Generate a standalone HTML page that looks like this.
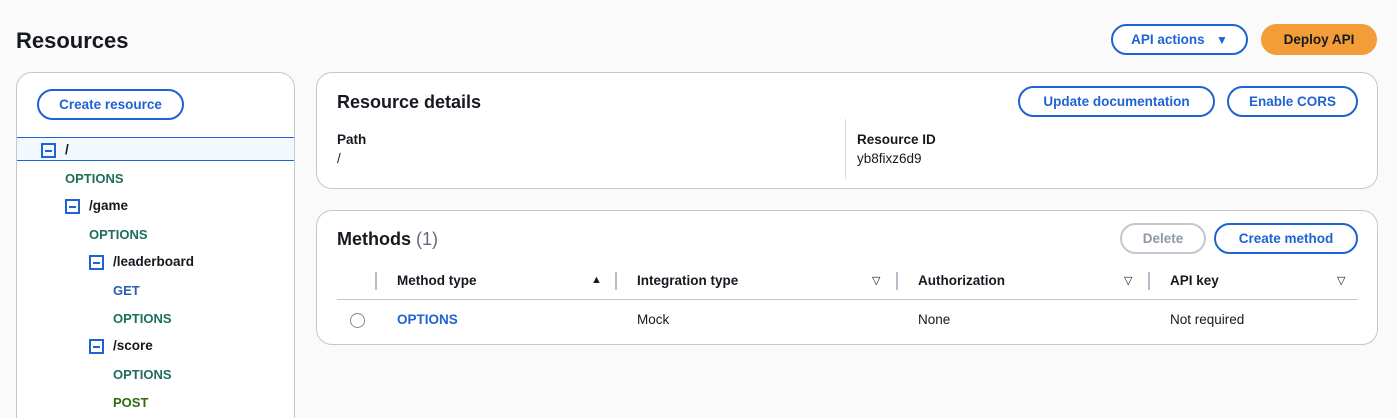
<!DOCTYPE html>
<html style="overflow:hidden;height:418px"><head><style>
*{box-sizing:border-box;margin:0;padding:0}
body{width:1397px;height:418px;background:#fafafa;font-family:"Liberation Sans",sans-serif;font-size:13.5px;color:#16191f;position:relative;overflow:hidden}
.abs{position:absolute}
.btn{position:absolute;border:2px solid #1f62d4;border-radius:20px;color:#1f62d4;font-weight:bold;font-size:13.5px;display:flex;align-items:center;justify-content:center;background:#fff}
.panel{position:absolute;background:#fff;border:1px solid #c6c6cd;border-radius:16px}
.b{font-weight:bold}
.g{color:#1d6e5d;font-weight:bold;font-size:13px}
.box{position:absolute;width:15px;height:15px;border:2px solid #1f62d4}
.box:after{content:"";position:absolute;left:2px;right:2px;top:5px;height:2px;background:#1f62d4}
.sep{position:absolute;width:2px;height:18px;background:#b6bec9}
.tri{position:absolute;font-size:11px}
</style></head><body>
<div class="abs b" style="left:16px;top:28px;font-size:22px">Resources</div>
<div class="btn" style="left:1111px;top:24px;width:137px;height:31px">API actions&nbsp;&nbsp;&nbsp;<span style="font-size:12px">▼</span></div>
<div class="btn" style="left:1261px;top:24px;width:116px;height:31px;background:#f39d39;border-color:#f39d39;color:#16191f">Deploy API</div>

<div class="panel" style="left:16px;top:72px;width:279px;height:360px;overflow:hidden">
<div class="btn" style="left:20px;top:16px;width:147px;height:31px">Create resource</div>
<div class="abs" style="left:0;top:64px;width:279px;height:24px;background:#f2f8fd;border-top:1px solid #1f62d4;border-bottom:1px solid #1f62d4"></div>
<div class="box" style="left:24px;top:70px"></div><div class="abs b" style="left:48px;top:69px">/</div>
<div class="abs g" style="left:48px;top:98px">OPTIONS</div>
<div class="box" style="left:48px;top:126px"></div><div class="abs b" style="left:72px;top:125px">/game</div>
<div class="abs g" style="left:72px;top:154px">OPTIONS</div>
<div class="box" style="left:72px;top:182px"></div><div class="abs b" style="left:96px;top:181px">/leaderboard</div>
<div class="abs g" style="left:96px;top:210px;color:#295ea8">GET</div>
<div class="abs g" style="left:96px;top:238px">OPTIONS</div>
<div class="box" style="left:72px;top:266px"></div><div class="abs b" style="left:96px;top:265px">/score</div>
<div class="abs g" style="left:96px;top:294px">OPTIONS</div>
<div class="abs g" style="left:96px;top:322px;color:#2e6a14">POST</div>
</div>

<div class="panel" style="left:316px;top:72px;width:1062px;height:117px">
<div class="abs b" style="left:20px;top:19px;font-size:18px">Resource details</div>
<div class="btn" style="left:701px;top:13px;width:197px;height:31px">Update documentation</div>
<div class="btn" style="left:910px;top:13px;width:131px;height:31px">Enable CORS</div>
<div class="abs b" style="left:20px;top:59px">Path</div>
<div class="abs" style="left:20px;top:78px">/</div>
<div class="abs" style="left:528px;top:46px;width:1px;height:60px;background:#d5dbdb"></div>
<div class="abs b" style="left:540px;top:59px">Resource ID</div>
<div class="abs" style="left:540px;top:78px">yb8fixz6d9</div>
</div>

<div class="panel" style="left:316px;top:210px;width:1062px;height:135px">
<div class="abs" style="left:20px;top:18px;font-size:18px"><b>Methods</b> <span style="color:#5f6b7a">(1)</span></div>
<div class="btn" style="left:803px;top:12px;width:86px;height:31px;border-color:#c6c6cd;color:#8d99a8">Delete</div>
<div class="btn" style="left:897px;top:12px;width:144px;height:31px">Create method</div>
<div class="sep" style="left:58px;top:61px"></div>
<div class="abs b" style="left:80px;top:62px">Method type</div>
<div class="tri" style="left:274px;top:63px">▲</div>
<div class="sep" style="left:298px;top:61px"></div>
<div class="abs b" style="left:320px;top:62px">Integration type</div>
<div class="tri" style="left:555px;top:63px">▽</div>
<div class="sep" style="left:579px;top:61px"></div>
<div class="abs b" style="left:601px;top:62px">Authorization</div>
<div class="tri" style="left:807px;top:63px">▽</div>
<div class="sep" style="left:831px;top:61px"></div>
<div class="abs b" style="left:853px;top:62px">API key</div>
<div class="tri" style="left:1020px;top:63px">▽</div>
<div class="abs" style="left:20px;top:88px;width:1021px;height:1px;background:#c6c6cd"></div>
<div class="abs" style="left:33px;top:102px;width:15px;height:15px;border:1px solid #7d8998;border-radius:50%"></div>
<div class="abs b" style="left:80px;top:101px;color:#1f62d4">OPTIONS</div>
<div class="abs" style="left:320px;top:101px">Mock</div>
<div class="abs" style="left:601px;top:101px">None</div>
<div class="abs" style="left:853px;top:101px">Not required</div>
</div>
</body></html>
